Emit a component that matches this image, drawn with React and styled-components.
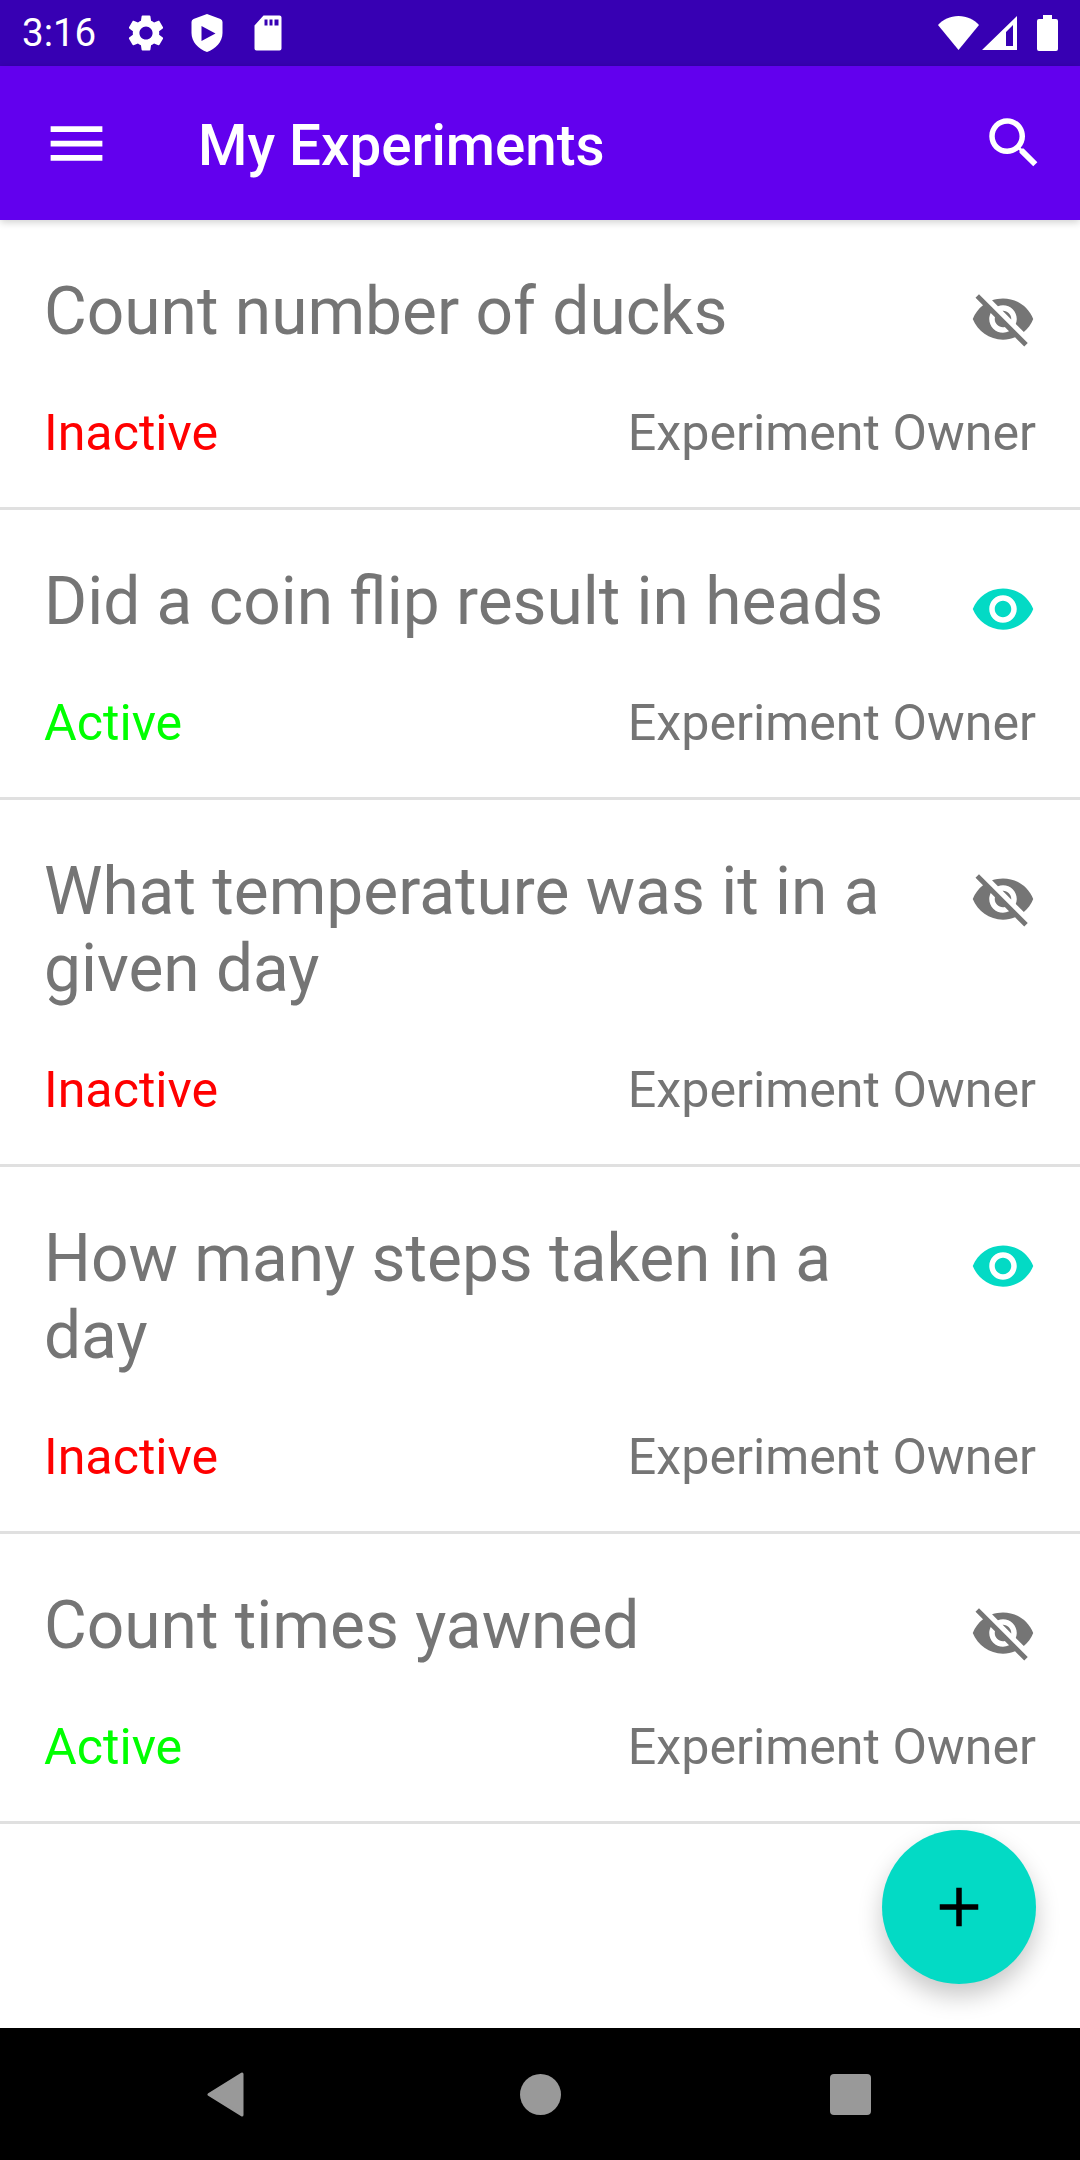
import React from 'react'
import styled, { createGlobalStyle } from 'styled-components'

const GlobalStyle = createGlobalStyle`
    html, body {
        margin: 0;
        padding: 0;
        background: white;
    }
    * {
        box-sizing: border-box;
    }
`

const Screen = styled.div`
    display: flex;
    flex-direction: column;
    width: 1080px;
    height: 2160px;
    font-family: Roboto, "Liberation Sans", sans-serif;
    background: white;
`

const StatusBar = styled.div`
    display: flex;
    flex-direction: row;
    justify-content: space-between;
    align-items: center;
    height: 66px;
    padding: 0 22px 0 22px;
    background: #3700B3;
    color: white;
`

const StatusGroup = styled.div`
    display: flex;
    flex-direction: row;
    align-items: center;
    gap: ${props => props.gap || '17px'};
`

const Time = styled.span`
    width: 85px;
    font-size: 38.5px;
    line-height: 66px;
`

const BatteryIcon = styled.svg`
    margin-left: 17px;
`

const Toolbar = styled.div`
    position: relative;
    z-index: 1;
    display: flex;
    flex-direction: row;
    align-items: center;
    height: 154px;
    padding: 0 33px 0 42px;
    background: #6200EE;
    box-shadow: 0 2px 8px rgba(0, 0, 0, 0.2);
`

const ToolbarTitle = styled.h1`
    flex: 1;
    margin: 5px 0 0 87px;
    color: white;
    font-size: 56.5px;
    font-weight: 500;
`

const Content = styled.div`
    position: relative;
    flex: 1;
`

const Row = styled.div`
    display: flex;
    flex-direction: column;
    padding: 53px 44px 0 44px;
    height: ${props => props.lines === 2 ? '367px' : '290px'};
    border-bottom: 3px solid #E0E0E0;
`

const TitleRow = styled.div`
    display: flex;
    flex-direction: row;
    align-items: flex-start;
    flex: 1;
`

const Title = styled.div`
    flex: 1;
    padding-right: 75px;
    color: #757575;
    font-size: 65.8px;
    line-height: 77px;
`

const EyeIcon = styled.svg`
    flex-shrink: 0;
    margin-top: 13px;
    fill: ${props => props.active ? '#03DAC5' : '#757575'};
`

const InfoRow = styled.div`
    display: flex;
    flex-direction: row;
    justify-content: space-between;
    align-items: center;
    height: 76px;
    margin-bottom: 37px;
    font-size: 50.2px;
`

const Status = styled.span`
    color: ${props => props.active ? '#00FF00' : '#FF0000'};
`

const Owner = styled.span`
    color: #757575;
`

const Fab = styled.button`
    position: absolute;
    right: 44px;
    bottom: 44px;
    display: flex;
    justify-content: center;
    align-items: center;
    width: 154px;
    height: 154px;
    padding: 0;
    border: none;
    border-radius: 50%;
    background: #03DAC5;
    box-shadow: 0 12px 24px rgba(0, 0, 0, 0.22);
`

const NavBar = styled.div`
    display: grid;
    grid-template-columns: 315px 315px 305px;
    align-items: center;
    justify-items: center;
    height: 132px;
    padding-left: 68px;
    background: black;
`

const experiments = [
    { title: 'Count number of ducks', active: false, visible: false, lines: 1 },
    { title: 'Did a coin flip result in heads', active: true, visible: true, lines: 1 },
    { title: 'What temperature was it in a given day', active: false, visible: false, lines: 2 },
    { title: 'How many steps taken in a day', active: false, visible: true, lines: 2 },
    { title: 'Count times yawned', active: true, visible: false, lines: 1 },
]

const eyeOn = 'M12 4.5C7 4.5 2.73 7.61 1 12c1.73 4.39 6 7.5 11 7.5s9.27-3.11 11-7.5c-1.73-4.39-6-7.5-11-7.5zM12 17c-2.76 0-5-2.24-5-5s2.24-5 5-5 5 2.24 5 5-2.24 5-5 5zm0-8c-1.66 0-3 1.34-3 3s1.34 3 3 3 3-1.34 3-3-1.34-3-3-3z'
const eyeOff = 'M12 7c2.76 0 5 2.24 5 5 0 .65-.13 1.26-.36 1.83l2.92 2.92c1.51-1.26 2.7-2.89 3.43-4.75-1.73-4.39-6-7.5-11-7.5-1.4 0-2.74.25-3.98.7l2.16 2.16C10.74 7.13 11.35 7 12 7zM2 4.27l2.28 2.28.46.46C3.08 8.3 1.78 10.02 1 12c1.73 4.39 6 7.5 11 7.5 1.55 0 3.03-.3 4.38-.84l.42.42L19.73 22 21 20.73 3.27 3 2 4.27zM7.53 9.8l1.55 1.55c-.05.21-.08.43-.08.65 0 1.66 1.34 3 3 3 .22 0 .44-.03.65-.08l1.55 1.55c-.67.33-1.41.53-2.2.53-2.76 0-5-2.24-5-5 0-.79.2-1.53.53-2.2zm4.31-.78l3.15 3.15.02-.16c0-1.66-1.34-3-3-3l-.17.01z'
const gear = 'M19.14 12.94c.04-.3.06-.61.06-.94 0-.32-.02-.64-.07-.94l2.03-1.58c.18-.14.23-.41.12-.61l-1.92-3.32c-.12-.22-.37-.29-.59-.22l-2.39.96c-.5-.38-1.03-.7-1.62-.94l-.36-2.54c-.04-.24-.24-.41-.48-.41h-3.84c-.24 0-.43.17-.47.41l-.36 2.54c-.59.24-1.13.57-1.62.94l-2.39-.96c-.22-.08-.47 0-.59.22L2.74 8.87c-.12.21-.08.47.12.61l2.03 1.58c-.05.3-.09.63-.09.94s.02.64.07.94l-2.03 1.58c-.18.14-.23.41-.12.61l1.92 3.32c.12.22.37.29.59.22l2.39-.96c.5.38 1.03.7 1.62.94l.36 2.54c.05.24.24.41.48.41h3.84c.24 0 .44-.17.47-.41l.36-2.54c.59-.24 1.13-.56 1.62-.94l2.39.96c.22.08.47 0 .59-.22l1.92-3.32c.12-.22.07-.47-.12-.61l-2.01-1.58zM12 15.6c-1.98 0-3.6-1.62-3.6-3.6s1.62-3.6 3.6-3.6 3.6 1.62 3.6 3.6-1.62 3.6-3.6 3.6z'

const App = () => {
    return (
        <Screen>
            <GlobalStyle />
            <StatusBar>
                <StatusGroup>
                    <Time>3:16</Time>
                    <svg width="44" height="44" viewBox="0 0 24 24" fill="white">
                        <path d={gear} />
                    </svg>
                    <svg width="44" height="44" viewBox="-6.5 -3 44 44" fill="white">
                        <path fillRule="evenodd" d="M15.5 0 L29 5 Q31 5.8 31 8 V19 C31 28 24 35 15.5 38 C7 35 0 28 0 19 V8 Q0 5.8 2 5 Z M10 12 V27 L24 19.5 Z" />
                    </svg>
                    <svg width="44" height="44" viewBox="-8.5 -4.5 44 44" fill="white">
                        <path fillRule="evenodd" d="M9 0 H25 a2 2 0 0 1 2 2 V33 a2 2 0 0 1 -2 2 H2 a2 2 0 0 1 -2 -2 V10 Z M10 4 V10 H13 V4 Z M15 4 V10 H18 V4 Z M20 4 V10 H24 V4 Z" />
                    </svg>
                </StatusGroup>
                <StatusGroup gap="3px">
                    <svg width="41" height="34" viewBox="0 0 41 34" fill="white">
                        <path d="M20.5 34 L0 9 C5 3.5 12 0 20.5 0 S36 3.5 41 9 Z" />
                    </svg>
                    <svg width="35" height="34" viewBox="0 0 35 34" fill="white">
                        <path fillRule="evenodd" d="M35 0 V34 H0 Z M31 9 L24 16 V30 H31 Z" />
                    </svg>
                    <BatteryIcon width="21" height="36" viewBox="0 0 21 36" fill="white">
                        <path d="M6 0 H15 V4 H19 a2 2 0 0 1 2 2 V34 a2 2 0 0 1 -2 2 H2 a2 2 0 0 1 -2 -2 V6 a2 2 0 0 1 2 -2 H6 Z" />
                    </BatteryIcon>
                </StatusGroup>
            </StatusBar>
            <Toolbar>
                <svg width="69" height="69" viewBox="0 0 24 24" fill="white">
                    <path d="M3 18h18v-2H3v2zm0-5h18v-2H3v2zm0-7v2h18V6H3z" />
                </svg>
                <ToolbarTitle>My Experiments</ToolbarTitle>
                <svg width="66" height="66" viewBox="0 0 24 24" fill="white">
                    <path d="M15.5 14h-.79l-.28-.27C15.41 12.59 16 11.11 16 9.5 16 5.91 13.09 3 9.5 3S3 5.91 3 9.5 5.91 16 9.5 16c1.61 0 3.09-.59 4.23-1.57l.27.28v.79l5 4.99L20.49 19l-4.99-5zm-6 0C7.01 14 5 11.99 5 9.5S7.01 5 9.5 5 14 7.01 14 9.5 11.99 14 9.5 14z" />
                </svg>
            </Toolbar>
            <Content>
                {experiments.map((experiment, index) => {
                    return (
                        <Row key={index} lines={experiment.lines}>
                            <TitleRow>
                                <Title>{experiment.title}</Title>
                                <EyeIcon width="66" height="66" viewBox="0 0 24 24" active={experiment.visible}>
                                    <path d={experiment.visible ? eyeOn : eyeOff} />
                                </EyeIcon>
                            </TitleRow>
                            <InfoRow>
                                <Status active={experiment.active}>{experiment.active ? 'Active' : 'Inactive'}</Status>
                                <Owner>Experiment Owner</Owner>
                            </InfoRow>
                        </Row>
                    )
                })}
                <Fab>
                    <svg width="66" height="66" viewBox="0 0 24 24" fill="black">
                        <path d="M19 13h-6v6h-2v-6H5v-2h6V5h2v6h6v2z" />
                    </svg>
                </Fab>
            </Content>
            <NavBar>
                <svg width="37" height="45" viewBox="0 0 37 45" fill="#999999">
                    <path d="M35 2 V43 L2 22.5 Z" stroke="#999999" strokeWidth="3" strokeLinejoin="round" />
                </svg>
                <svg width="41" height="41" viewBox="0 0 41 41" fill="#999999">
                    <circle cx="20.5" cy="20.5" r="20.5" />
                </svg>
                <svg width="41" height="41" viewBox="0 0 41 41" fill="#999999">
                    <rect width="41" height="41" rx="4" />
                </svg>
            </NavBar>
        </Screen>
    )
}

export default App
